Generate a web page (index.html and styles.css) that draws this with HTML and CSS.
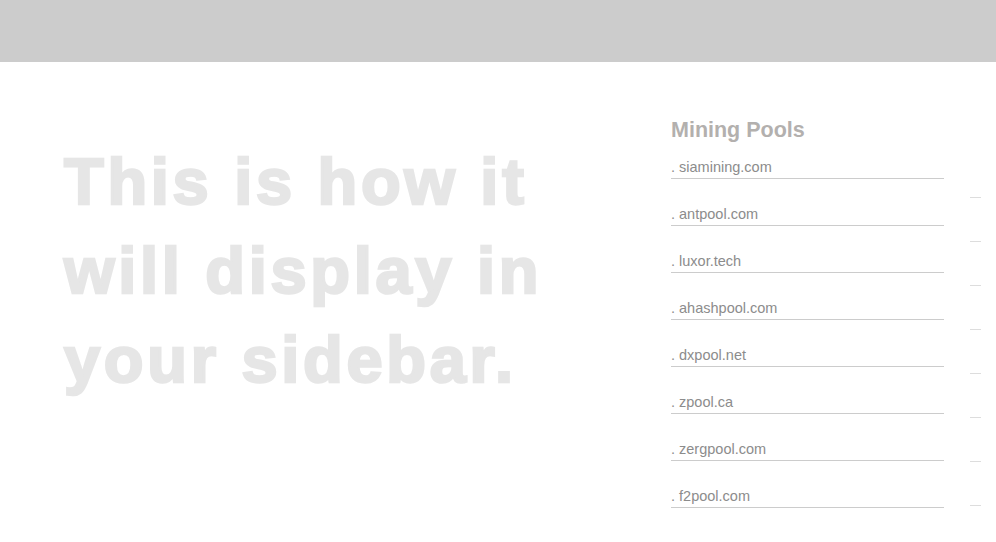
FILE: index.html
```html
<!DOCTYPE html>
<html>
<head>
<meta charset="utf-8">
<link rel="stylesheet" href="styles.css">
</head>
<body>
<header class="topbar"></header>
<main class="page">
  <section class="hero">
    <h1 class="hero-title">This is how it<br>will display in<br>your sidebar.</h1>
  </section>
  <aside class="sidebar">
    <h2 class="sidebar-title">Mining Pools</h2>
    <ul class="pool-list">
      <li class="pool-item"><a class="pool-link" href="#">. siamining.com</a></li>
      <li class="pool-item"><a class="pool-link" href="#">. antpool.com</a></li>
      <li class="pool-item"><a class="pool-link" href="#">. luxor.tech</a></li>
      <li class="pool-item"><a class="pool-link" href="#">. ahashpool.com</a></li>
      <li class="pool-item"><a class="pool-link" href="#">. dxpool.net</a></li>
      <li class="pool-item"><a class="pool-link" href="#">. zpool.ca</a></li>
      <li class="pool-item"><a class="pool-link" href="#">. zergpool.com</a></li>
      <li class="pool-item"><a class="pool-link" href="#">. f2pool.com</a></li>
    </ul>
  </aside>
  <div class="ticks">
    <span class="tick"></span><span class="tick"></span><span class="tick"></span><span class="tick"></span>
    <span class="tick"></span><span class="tick"></span><span class="tick"></span><span class="tick"></span>
  </div>
</main>
</body>
</html>
```
FILE: styles.css
```css
html, body {
  margin: 0;
  padding: 0;
  background: #ffffff;
  font-family: "Liberation Sans", Arial, sans-serif;
}
.topbar {
  height: 62px;
  background: #cccccc;
}
.page {
  display: flex;
  align-items: flex-start;
}
.hero {
  width: 608px;
  padding-left: 64px;
  padding-top: 75px;
  box-sizing: border-box;
}
.hero-title {
  margin: 0;
  font-size: 65px;
  line-height: 89px;
  font-weight: 700;
  letter-spacing: 3.7px;
  color: #e6e6e6;
  -webkit-text-stroke: 2.5px #e6e6e6;
  white-space: nowrap;
}
.sidebar {
  width: 273px;
  margin-left: 63px;
  padding-top: 56px;
}
.sidebar-title {
  margin: 0 0 17px 0;
  font-size: 21.5px;
  line-height: 24px;
  font-weight: 700;
  color: #b3b0ae;
}
.pool-list {
  list-style: none;
  margin: 0;
  padding: 0;
  display: flex;
  flex-direction: column;
  gap: 27px;
}
.pool-item {
  border-bottom: 1px solid #cccccc;
  line-height: 16px;
  padding-bottom: 3px;
}
.pool-link {
  font-size: 14.5px;
  color: #8c8c8c;
  text-decoration: none;
}
.ticks {
  margin-left: 26px;
  padding-top: 135px;
  display: flex;
  flex-direction: column;
  gap: 43px;
}
.tick {
  display: block;
  width: 11px;
  height: 1px;
  background: #dddddd;
}
```
